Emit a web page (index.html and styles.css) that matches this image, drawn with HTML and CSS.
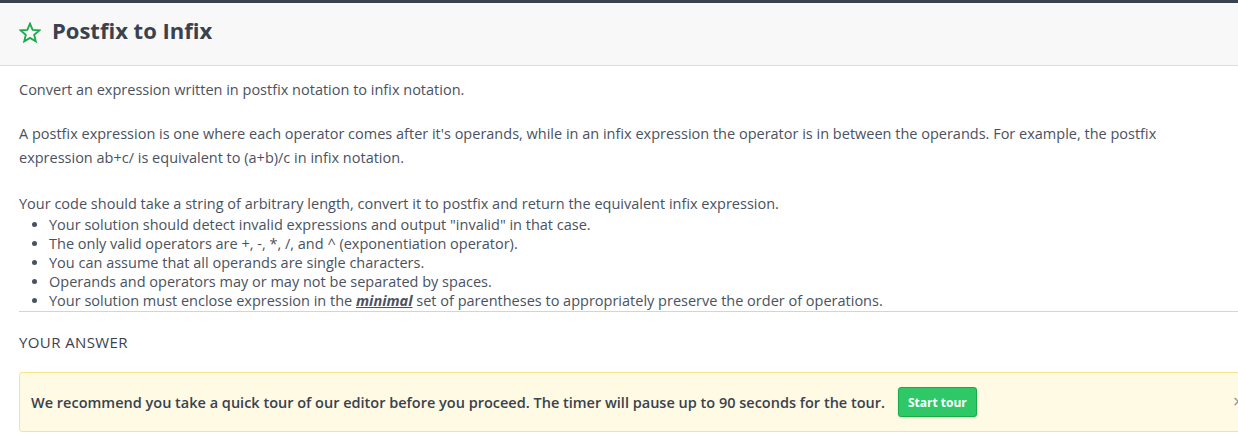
FILE: index.html
```html
<!DOCTYPE html>
<html>
<head>
<meta charset="utf-8">
<link rel="stylesheet" href="styles.css">
</head>
<body>
<div class="topbar"></div>
<header class="header">
  <svg class="star" width="22" height="21" viewBox="0 0 24 23"><path d="M12 1.8 L14.9 8.6 L22.2 9.2 L16.6 14 L18.3 21.2 L12 17.4 L5.7 21.2 L7.4 14 L1.8 9.2 L9.1 8.6 Z" fill="none" stroke="#1ba94c" stroke-width="2" stroke-linejoin="miter"/></svg>
  <h1 class="title">Postfix to Infix</h1>
</header>
<main class="content">
  <p class="para">Convert an expression written in postfix notation to infix notation.</p>
  <p class="para">A postfix expression is one where each operator comes after it's operands, while in an infix expression the operator is in between the operands. For example, the postfix expression ab+c/ is equivalent to (a+b)/c in infix notation.</p>
  <p class="para intro">Your code should take a string of arbitrary length, convert it to postfix and return the equivalent infix expression.</p>
  <ul class="rules">
    <li>Your solution should detect invalid expressions and output "invalid" in that case.</li>
    <li>The only valid operators are +, -, *, /, and ^ (exponentiation operator).</li>
    <li>You can assume that all operands are single characters.</li>
    <li>Operands and operators may or may not be separated by spaces.</li>
    <li>Your solution must enclose expression in the <u><strong><em>minimal</em></strong></u> set of parentheses to appropriately preserve the order of operations.</li>
  </ul>
  <div class="divider"></div>
  <h2 class="answer">YOUR ANSWER</h2>
  <div class="alert">
    <span class="alert-text">We recommend you take a quick tour of our editor before you proceed. The timer will pause up to 90 seconds for the tour.</span>
    <button class="btn">Start tour</button>
    <span class="close">×</span>
  </div>
</main>
</body>
</html>
```
FILE: styles.css
```css
html, body {
  margin: 0;
  padding: 0;
  background: #fff;
  overflow: hidden;
}
body {
  font-family: "Open Sans", "Noto Sans", sans-serif;
  color: #39424e;
  width: 1238px;
}
.topbar {
  height: 3px;
  background: #39424e;
}
.header {
  display: flex;
  align-items: center;
  background: #f8f8f8;
  border-bottom: 1px solid #dcdcdc;
  padding: 0 0 6px 19px;
  box-sizing: border-box;
  height: 63px;
}
.star {
  margin-right: 11px;
  margin-top: 2px;
}
.title {
  margin: -3px 0 0;
  font-size: 22px;
  font-weight: 700;
  color: #39424e;
}
.content {
  padding: 12px 20px 0 19px;
  font-size: 14.5px;
  color: #4a5260;
}
.para {
  margin: 0 0 20px;
  line-height: 24px;
}
.para.intro {
  margin: 23px 0 0;
  line-height: 22px;
}
.rules {
  margin: 0;
  padding-left: 30px;
  line-height: 19px;
}
.rules em {
  font-weight: 700;
}
.divider {
  height: 1px;
  background: #d4d4d4;
  margin: 1px -20px 0 0;
}
.answer {
  margin: 20px 0 0;
  font-size: 15px;
  font-weight: 400;
  letter-spacing: 0.4px;
  line-height: 20px;
  color: #39424e;
}
.alert {
  display: flex;
  align-items: center;
  margin: 20px -40px 0 0;
  height: 60px;
  box-sizing: border-box;
  background: #fffae3;
  border: 1px solid #f7e58e;
  border-radius: 3px;
  padding-left: 11px;
  position: relative;
}
.alert-text {
  font-size: 14.5px;
  font-weight: 600;
  color: #39424e;
}
.btn {
  margin-left: 13px;
  height: 30px;
  padding: 0 9px;
  font-family: inherit;
  font-size: 12px;
  font-weight: 700;
  color: #fff;
  background: #2ec866;
  border: 1px solid #1ba94c;
  border-radius: 3px;
  box-shadow: 0 1px 2px rgba(0,0,0,0.15);
}
.close {
  position: absolute;
  left: 1213px;
  top: 18px;
  font-size: 18px;
  color: #8a93a0;
  line-height: 20px;
}
```
